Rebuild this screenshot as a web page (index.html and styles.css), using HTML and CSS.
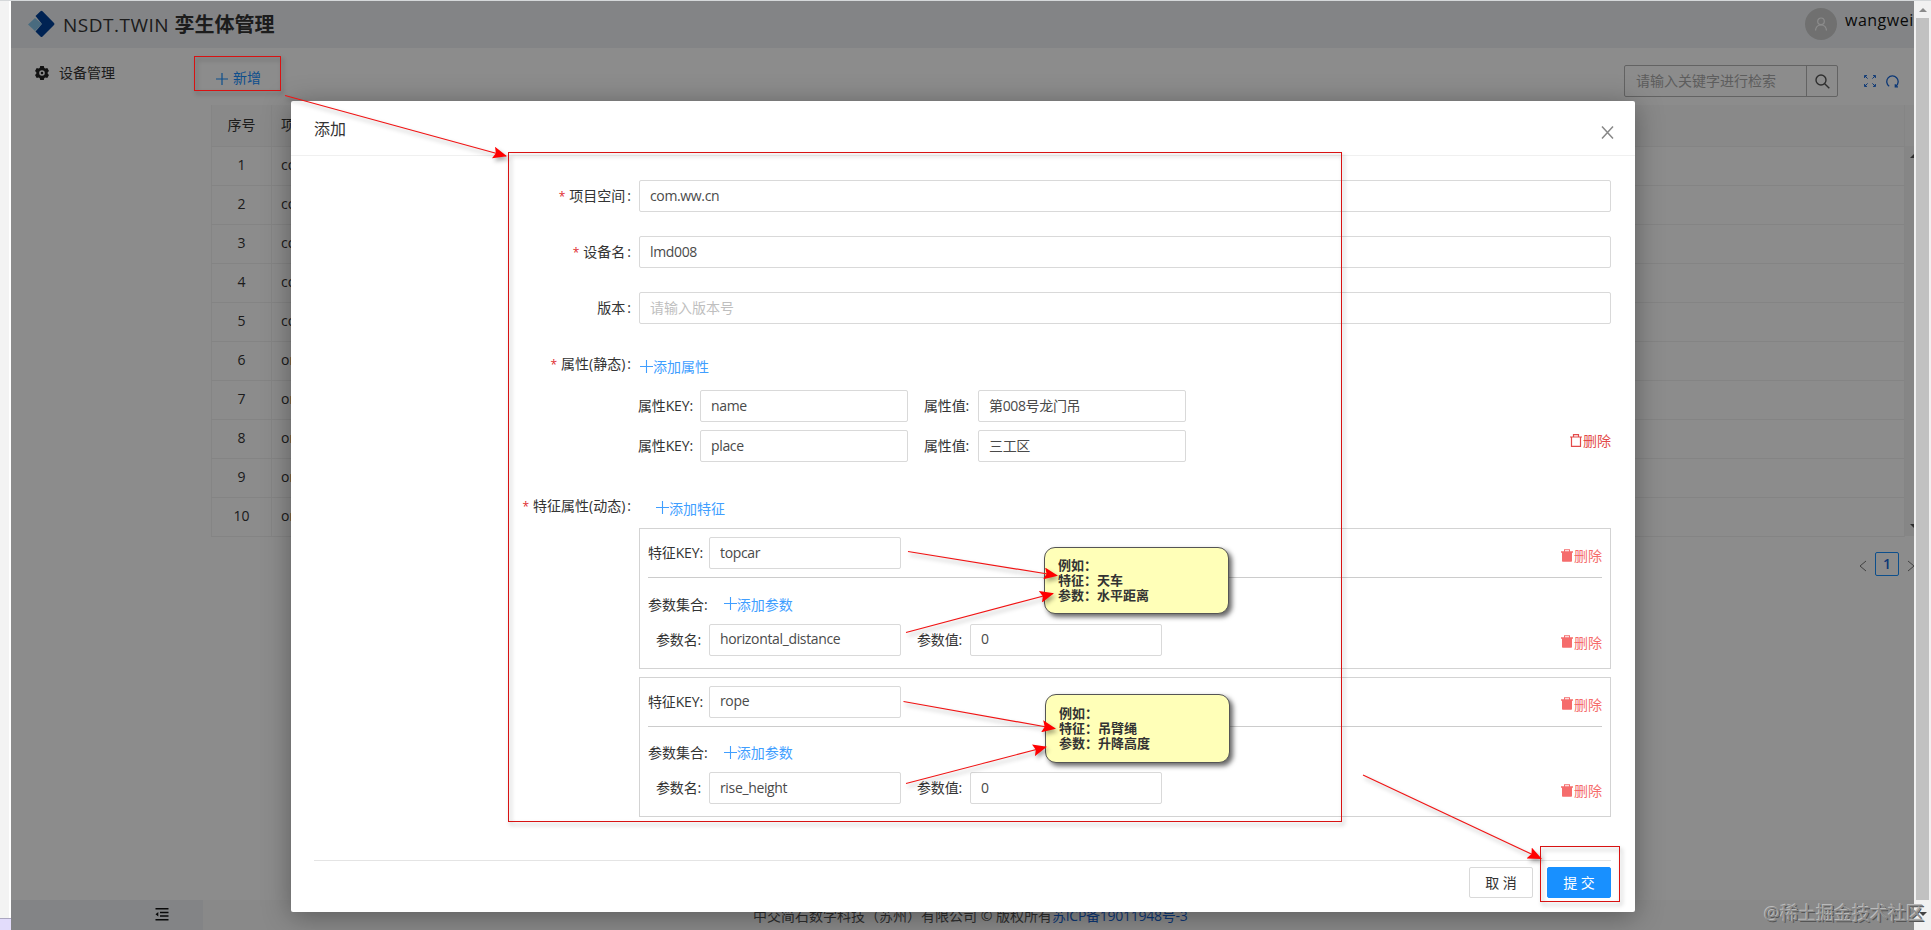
FILE: index.html
```
<!DOCTYPE html>
<html lang="zh-CN">
<head>
    <meta charset="UTF-8">
    <meta name="viewport" content="width=device-width, initial-scale=1.0">
    <title>NSDT.TWIN 孪生体管理</title>
    <link rel="stylesheet" href="styles.css">
</head>
<body>
    <div class="edge"><span class="edge-foot"></span></div>

    <div class="app">
        <header class="header">
            <svg class="logo" width="28" height="28" viewBox="0 0 28 28">
                <path fill="#85c4e8" d="M1 14.5 8 8l7 6-7 7z"/>
                <path fill="#004098" d="M8.500 6 13.500 1.200q1-1 2 0L27 13q1 1 0 2L15.500 26.400q-1 1-2 0L8.500 21.500 15 14z"/>
            </svg>
            <h1>NSDT.TWIN <b>孪生体管理</b></h1>
            <div class="user">
                <span class="avatar">
                    <svg width="14" height="14" viewBox="0 0 14 14" fill="none" stroke="#fff" stroke-width="1.200">
                        <circle cx="7" cy="4.300" r="3.300"/><path d="M1.500 13.500c.3-3.500 2.500-5.500 5.500-5.500s5.200 2 5.500 5.500"/>
                    </svg>
                </span>
                <span class="username">wangwei</span>
            </div>
        </header>

        <div class="layout">
            <aside class="sider">
                <div class="menu-item">
                    <svg width="14" height="14" viewBox="0 0 14 14">
                        <path fill="#222" fill-rule="evenodd" d="M5.200 0h3.600l.5 1.900 1.200.7 1.800-.6 1.700 3-1.300 1.300v1.400L14 9l-1.700 3-1.800-.6-1.200.7-.5 1.900H5.200l-.5-1.900-1.200-.7-1.800.6L0 9l1.300-1.300V6.300L0 5l1.700-3 1.800.6 1.200-.7zM7 4.200a2.800 2.800 0 1 0 0 5.600 2.800 2.800 0 0 0 0-5.600zM7 5.700a1.300 1.300 0 1 1 0 2.600 1.300 1.300 0 0 1 0-2.600z"/>
                    </svg>
                    <span class="lift">设备管理</span>
                </div>
                <div class="fold">
                    <svg width="14" height="13" viewBox="0 0 14 13" fill="#111">
                        <path d="M.5 0h13v1.500H.5zM5 3.700h8.500v1.500H5zM5 7.300h8.500v1.500H5zM.5 11h13v1.500H.5zM.5 6.250 3.300 4v4.500z"/>
                    </svg>
                </div>
            </aside>

            <main class="main">
                <div class="toolbar">
                    <span class="new-btn">
                        <svg width="12" height="12" viewBox="0 0 12 12" stroke="#1890ff" stroke-width="1.200"><path d="M6 0v12M0 6h12"/></svg>
                        <span class="lift">新增</span>
                    </span>
                    <div class="search">
                        <span class="search-text">请输入关键字进行检索</span>
                        <span class="search-btn">
                            <svg width="15" height="15" viewBox="0 0 15 15" fill="none" stroke="#555" stroke-width="1.400"><circle cx="6" cy="6" r="5"/><path d="m9.700 9.700 4.600 4.600"/></svg>
                        </span>
                    </div>
                    <svg class="tool" width="12" height="12" viewBox="0 0 12 12" fill="none" stroke="#1867d8"><path d="M.6 3V.6H3M.6.6l3 3M9 .6h2.400V3M11.400.6l-3 3M.6 9v2.400H3M.6 11.400l3-3M11.400 9v2.400H9M11.400 11.400l-3-3"/></svg>
                    <svg class="tool" width="13" height="13" viewBox="0 0 13 13" fill="none" stroke="#1867d8" stroke-width="1.300"><path d="M3.200 11.300a5.700 5.700 0 1 1 6.800-.2M12 11.800H9.300V9.200"/></svg>
                </div>

                <table class="table">
                    <tr><th class="num">序号</th><th>项目空间</th><th class="gutter"></th></tr>
                    <tr>
                        <td class="num">1</td><td>com.ww.cn</td>
                        <td class="gutter" rowspan="10">
                            <div class="gutter-arrows">
                                <svg width="8" height="5" viewBox="0 0 8 5"><path fill="#555" d="M0 5l4-4 4 4z"/></svg>
                                <svg width="8" height="5" viewBox="0 0 8 5"><path fill="#555" d="M0 0l4 4 4-4z"/></svg>
                            </div>
                        </td>
                    </tr>
                    <tr><td class="num">2</td><td>com.ww.cn</td></tr>
                    <tr><td class="num">3</td><td>com.ww.cn</td></tr>
                    <tr><td class="num">4</td><td>com.ww.cn</td></tr>
                    <tr><td class="num">5</td><td>com.ww.cn</td></tr>
                    <tr><td class="num">6</td><td>org.eclipse</td></tr>
                    <tr><td class="num">7</td><td>org.eclipse</td></tr>
                    <tr><td class="num">8</td><td>org.eclipse</td></tr>
                    <tr><td class="num">9</td><td>org.eclipse</td></tr>
                    <tr><td class="num">10</td><td>org.eclipse</td></tr>
                </table>
                <div class="pager">
                    <svg width="8" height="12" viewBox="0 0 8 12" fill="none" stroke="#777"><path d="M7 1 1 6l6 5"/></svg>
                    <span class="page">1</span>
                    <svg width="8" height="12" viewBox="0 0 8 12" fill="none" stroke="#777"><path d="m1 1 6 5-6 5"/></svg>
                </div>
                <footer class="footer">中交简石数字科技（苏州）有限公司 © 版权所有<a>苏ICP备19011948号-3</a></footer>
            </main>
        </div>
        <div class="mask"></div>
    </div>

    <div class="scrollbar">
        <svg width="17" height="17" viewBox="0 0 17 17"><path fill="#8b8b8b" d="m5 11 4-4 4 4z"/></svg>
        <span class="thumb"></span>
        <svg width="17" height="30" viewBox="0 0 17 30"><path fill="#444" d="m5 12 4 4 4-4z"/></svg>
    </div>

    <div class="modal">
        <div class="modal-header">
            添加
            <svg width="13" height="13" viewBox="0 0 13 13" stroke="#888" stroke-width="1.500"><path d="m1 .5 11 12M12 .5l-11 12"/></svg>
        </div>
        <div class="modal-body">
            <div class="form-item">
                <label class="required">项目空间<i>:</i></label>
                <div class="control"><input class="input" value="com.ww.cn"></div>
            </div>
            <div class="form-item">
                <label class="required">设备名<i>:</i></label>
                <div class="control"><input class="input" value="lmd008"></div>
            </div>
            <div class="form-item">
                <label>版本<i>:</i></label>
                <div class="control"><input class="input" placeholder="请输入版本号"></div>
            </div>
            <div class="form-item">
                <label class="required">属性(静态)<i>:</i></label>
                <div class="control">
                    <div class="add attr-add"><svg width="13" height="13" viewBox="0 0 13 13"><path d="M6.500 0v13M0 6.500h13"/></svg>添加属性</div>
                    <div class="attr-row">
                        <span class="key">属性KEY:</span><input class="input" value="name">
                        <span class="val">属性值:</span><input class="input" value="第008号龙门吊">
                    </div>
                    <div class="attr-row">
                        <span class="key">属性KEY:</span><input class="input" value="place">
                        <span class="val">属性值:</span><input class="input" value="三工区">
                        <span class="delete outline"><svg width="12" height="13" viewBox="0 0 12 13"><path d="M0 3h12M3.500 3V.700h5V3M1.500 3v9.300h9V3" fill="none" stroke="currentColor" stroke-width="1.200"/></svg>删除</span>
                    </div>
                </div>
            </div>
            <div class="form-item features">
                <label class="required">特征属性(动态)<i>:</i></label>
                <div class="control">
                    <div class="add feature-add"><svg width="13" height="13" viewBox="0 0 13 13"><path d="M6.500 0v13M0 6.500h13"/></svg>添加特征</div>
                    <div class="card">
                        <div class="feature-row">
                            <span class="name">特征KEY:</span><input class="input" value="topcar">
                            <span class="delete"><svg width="12" height="13" viewBox="0 0 12 13"><path d="M0 2.300h3V.3h6v2h3v1.500h-1V12q0 .8-.8.800H1.800Q1 12.800 1 12V3.800H0zM4 1.300v1h4v-1z" fill="currentColor" fill-rule="evenodd"/></svg>删除</span>
                        </div>
                        <div class="param-head">参数集合:<span class="add"><svg width="13" height="13" viewBox="0 0 13 13"><path d="M6.500 0v13M0 6.500h13"/></svg>添加参数</span></div>
                        <div class="param-row">
                            <span class="name">参数名:</span><input class="input" value="horizontal_distance">
                            <span class="val">参数值:</span><input class="input" value="0">
                            <span class="delete"><svg width="12" height="13" viewBox="0 0 12 13"><path d="M0 2.300h3V.3h6v2h3v1.500h-1V12q0 .8-.8.800H1.800Q1 12.800 1 12V3.800H0zM4 1.300v1h4v-1z" fill="currentColor" fill-rule="evenodd"/></svg>删除</span>
                        </div>
                    </div>
                    <div class="card">
                        <div class="feature-row">
                            <span class="name">特征KEY:</span><input class="input" value="rope">
                            <span class="delete"><svg width="12" height="13" viewBox="0 0 12 13"><path d="M0 2.300h3V.3h6v2h3v1.500h-1V12q0 .8-.8.800H1.800Q1 12.800 1 12V3.800H0zM4 1.300v1h4v-1z" fill="currentColor" fill-rule="evenodd"/></svg>删除</span>
                        </div>
                        <div class="param-head">参数集合:<span class="add"><svg width="13" height="13" viewBox="0 0 13 13"><path d="M6.500 0v13M0 6.500h13"/></svg>添加参数</span></div>
                        <div class="param-row">
                            <span class="name">参数名:</span><input class="input" value="rise_height">
                            <span class="val">参数值:</span><input class="input" value="0">
                            <span class="delete"><svg width="12" height="13" viewBox="0 0 12 13"><path d="M0 2.300h3V.3h6v2h3v1.500h-1V12q0 .8-.8.800H1.800Q1 12.800 1 12V3.800H0zM4 1.300v1h4v-1z" fill="currentColor" fill-rule="evenodd"/></svg>删除</span>
                        </div>
                    </div>
                </div>
            </div>
        </div>
        <div class="modal-footer">
            <button class="btn">取 消</button>
            <button class="btn primary">提 交</button>
        </div>
    </div>

    <!-- annotations -->
    <div class="note note-1">例如：<br>特征：天车<br>参数：水平距离</div>
    <div class="note note-2">例如：<br>特征：吊臂绳<br>参数：升降高度</div>
    <svg class="marks" width="1931" height="930" viewBox="0 0 1931 930">
        <defs>
            <marker id="head" markerUnits="userSpaceOnUse" markerWidth="14" markerHeight="12" refX="13" refY="6" orient="auto">
                <path fill="#f00" d="M0 0 14 6 0 12 2.500 6z"/>
            </marker>
        </defs>
        <g fill="none" stroke="#d81212">
            <rect x="194.500" y="56.500" width="86" height="34"/>
            <rect x="508.500" y="152.500" width="833" height="669"/>
            <rect x="1540.500" y="846.500" width="79" height="55"/>
        </g>
        <g stroke="#f01414" stroke-width="1.200">
            <path marker-end="url(#head)" d="M285 95.500 506 156"/>
            <path marker-end="url(#head)" d="M908 551.500 1057 575.500"/>
            <path marker-end="url(#head)" d="M906 632.500 1053 593.500"/>
            <path marker-end="url(#head)" d="M903.500 701.500 1055 728.500"/>
            <path marker-end="url(#head)" d="M906 783.500 1046 747"/>
            <path marker-end="url(#head)" d="M1363 775 1541 858.500"/>
        </g>
    </svg>
    <div class="watermark">@稀土掘金技术社区</div>
</body>
</html>
```
FILE: styles.css
```
* {
    box-sizing: border-box;
}
body {
    position: relative;
    display: flex;
    width: 1931px;
    height: 930px;
    margin: 0;
    overflow: hidden;
    border-top: 1px solid #d5d8da;
    font-family: "Open Sans", "Noto Sans CJK SC", sans-serif;
    font-size: 14px;
    color: #333;
    background: #fff;
}
svg {
    flex: none;
}
.edge {
    display: flex;
    align-items: flex-end;
    width: 11px;
    background: linear-gradient(90deg, #f3f3f3 9px, #fff 9px);
}
.edge-foot {
    width: 11px;
    height: 12px;
    border-top: 1px solid #aaa6c0;
    background: #e2dcfb;
}

/* page */
.app {
    position: relative;
    display: flex;
    flex-direction: column;
    width: 1903px;
    overflow: hidden;
    background: #fff;
}
.header {
    display: flex;
    align-items: center;
    height: 47px;
    padding-left: 16px;
    background: #eef1f5;
}
.header h1 {
    margin: 0 0 0 8px;
    font-size: 19px;
    font-weight: 400;
    line-height: 1;
    letter-spacing: 0.5px;
}
.header h1 b {
    font-size: 20px;
    letter-spacing: 0;
}
.logo {
    margin-top: -2px;
}
.user {
    display: flex;
    align-items: center;
    gap: 8px;
    width: 109px;
    margin-left: auto;
    font-size: 16px;
    letter-spacing: 0.5px;
}
.avatar {
    display: flex;
    flex: none;
    align-items: center;
    justify-content: center;
    width: 32px;
    height: 32px;
    margin-top: -2px;
    border-radius: 50%;
    background: #ccc;
}
.username {
    margin-top: -9px;
    color: #111;
}
.layout {
    display: flex;
    flex: 1;
}
.sider {
    display: flex;
    flex-direction: column;
    justify-content: space-between;
    width: 192px;
}
.menu-item {
    display: flex;
    align-items: center;
    gap: 10px;
    height: 40px;
    margin-top: 5px;
    padding-left: 24px;
}
.lift {
    padding-bottom: 3px;
}
.fold {
    display: flex;
    justify-content: flex-end;
    height: 30px;
    padding: 8px 34px 0 0;
    background: #eef1f5;
}
.main {
    display: flex;
    flex: 1;
    flex-direction: column;
    padding-left: 8px;
}
.toolbar {
    display: flex;
    align-items: center;
    height: 57px;
    padding: 9px 15px 0 5px;
}
.new-btn {
    display: flex;
    align-items: center;
    gap: 5px;
    margin: -5px auto 0 0;
    color: #1890ff;
}
.search {
    display: flex;
    width: 214px;
    height: 32px;
    margin-right: 26px;
    border: 1px solid #b5b5b5;
    border-radius: 2px;
    line-height: 30px;
    color: #aaa;
}
.search-text {
    flex: 1;
    padding-left: 11px;
}
.search-btn {
    display: flex;
    align-items: center;
    justify-content: center;
    width: 31px;
    border-left: 1px solid #b5b5b5;
}
.tool + .tool {
    margin-left: 10px;
}
.table {
    width: 100%;
    border-collapse: collapse;
}
.table th,
.table td {
    height: 39px;
    padding: 0 9px 3px;
    border-bottom: 1px solid #f0f0f0;
    border-left: 1px solid #f2f2f2;
    font-weight: 400;
    text-align: left;
}
.table th {
    height: 41px;
    background: #fafafa;
}
.table .num {
    width: 60px;
    text-align: center;
}
.table .gutter {
    width: 10px;
    padding: 0;
    border-bottom: 0;
}
.table td.gutter {
    background: #f4f4f4;
}
.gutter-arrows {
    display: flex;
    flex-direction: column;
    align-items: flex-start;
    justify-content: space-between;
    width: 9px;
    height: 376px;
    padding-left: 5px;
    overflow: hidden;
}
.pager {
    display: flex;
    align-items: center;
    justify-content: flex-end;
    gap: 8px;
    margin-top: 15px;
    margin-right: -1px;
}
.pager svg {
    margin-top: 5px;
}
.page {
    width: 24px;
    height: 24px;
    border: 1px solid #1890ff;
    border-radius: 2px;
    font-weight: 600;
    line-height: 22px;
    text-align: center;
    color: #1867d8;
}
.footer {
    height: 30px;
    margin: auto 0 0 -8px;
    padding-left: 550px;
    background: #fafafa;
    line-height: 32px;
    color: #555;
}
.footer a {
    letter-spacing: -0.25px;
    color: #1867d8;
}
.mask {
    position: absolute;
    inset: 0;
    background: rgba(0, 0, 0, 0.45);
}
.scrollbar {
    display: flex;
    flex-direction: column;
    width: 17px;
    background: #f1f1f1;
}
.thumb {
    flex: 1;
    width: 13px;
    margin-left: 2px;
    background: #c1c1c1;
}

/* modal */
.modal {
    position: absolute;
    top: 100px;
    left: 291px;
    display: flex;
    flex-direction: column;
    width: 1344px;
    height: 811px;
    border-radius: 2px;
    background: #fff;
    box-shadow: 0 4px 28px rgba(0, 0, 0, 0.35);
}
.modal-header {
    display: flex;
    align-items: center;
    justify-content: space-between;
    height: 55px;
    padding: 0 21px 1px 23px;
    border-bottom: 1px solid #f0f0f0;
    font-size: 16px;
}
.modal-header svg {
    margin-top: 9px;
}
.modal-body {
    padding: 24px 24px 0 0;
}
.form-item {
    display: flex;
    margin-bottom: 24px;
}
.form-item > label {
    width: 348px;
    padding-right: 8px;
    line-height: 31px;
    text-align: right;
}
.form-item label i {
    margin-left: 2px;
    font-style: normal;
}
.required::before {
    content: "*";
    margin-right: 4px;
    font-size: 12px;
    color: #e02b30;
}
.control {
    flex: 1;
}
.input {
    width: 100%;
    height: 32px;
    padding: 0 11px 2px 10px;
    border: 1px solid #d9d9d9;
    border-radius: 2px;
    font: inherit;
    letter-spacing: -0.35px;
    color: #4a4a4a;
    background: #fff;
}
.input::placeholder {
    letter-spacing: 0;
    color: #bfbfbf;
}
.add {
    display: flex;
    align-items: center;
    color: #409eff;
}
.add path {
    stroke: #409eff;
    stroke-width: 1.1;
}
.attr-add {
    height: 36px;
    margin: 0 0 6px 1px;
}
.attr-row,
.feature-row,
.param-row {
    display: flex;
    align-items: center;
}
.attr-row {
    margin-bottom: 8px;
}
.key,
.val,
.name {
    padding-bottom: 2px;
    letter-spacing: -0.15px;
}
.attr-row .key {
    width: 62px;
    margin-left: -1px;
}
.attr-row .input {
    width: 208px;
}
.attr-row .val {
    width: 54px;
    margin-left: 16px;
}
.delete {
    display: flex;
    align-items: center;
    gap: 1px;
    margin: 4px 0 0 auto;
    color: #f56c6c;
}
.delete.outline {
    margin-top: -12px;
    color: #e34a4a;
}
.features {
    margin-top: -4px;
}
.feature-add {
    height: 35px;
    margin: 0 0 3px 17px;
}
.card {
    padding: 8px 8px 12px;
    border: 1px solid #d3d3d3;
}
.card + .card {
    margin-top: 8px;
}
.card .input {
    width: 192px;
}
.feature-row {
    height: 41px;
    padding-bottom: 8px;
    border-bottom: 1px solid #ccc;
}
.feature-row .name {
    width: 61px;
}
.param-head {
    display: flex;
    align-items: center;
    gap: 16px;
    height: 45.5px;
    padding-top: 6px;
}
.param-row .name {
    width: 53px;
    margin-left: 8px;
}
.param-row .val {
    width: 53px;
    margin-left: 16px;
}
.modal-footer {
    display: flex;
    justify-content: flex-end;
    gap: 14px;
    margin: auto 24px 0 23px;
    padding: 6px 0 14px;
    border-top: 1px solid #e4e4e4;
}
.btn {
    width: 64px;
    height: 31px;
    padding-bottom: 3px;
    border: 1px solid #d9d9d9;
    border-radius: 2px;
    font: inherit;
    color: #333;
    background: #fff;
}
.btn.primary {
    border-color: #1890ff;
    color: #fff;
    background: #1890ff;
}

/* annotations */
.note {
    position: absolute;
    left: 1044px;
    width: 185px;
    height: 67px;
    padding: 9px 13px;
    border: 1px solid #555;
    border-radius: 11px;
    background: #ffffb8;
    box-shadow: 3px 3px 5px rgba(0, 0, 0, 0.6);
    font-family: "Noto Sans CJK SC", sans-serif;
    font-size: 13px;
    font-weight: 700;
    line-height: 15px;
}
.note-1 {
    top: 546px;
}
.note-2 {
    top: 693px;
    left: 1045px;
    height: 69px;
    padding-top: 10px;
}
.marks {
    position: absolute;
    top: -1px;
    left: 0;
    filter: drop-shadow(2px 3px 2px rgba(0, 0, 0, 0.35));
}
.watermark {
    position: absolute;
    top: 899px;
    left: 1764px;
    font-size: 18px;
    line-height: 26px;
    white-space: nowrap;
    color: #8c8c8c;
    text-shadow: -1px -1px 0 #bbb, 1px 1px 0 #555;
}
```
